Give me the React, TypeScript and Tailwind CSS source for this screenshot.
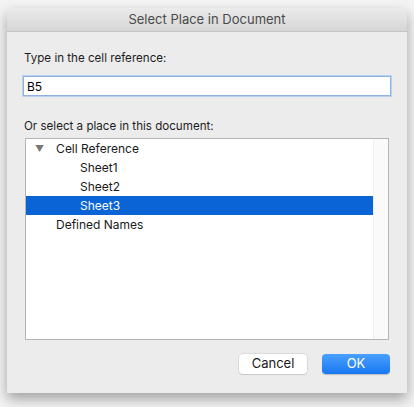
import React, { useState } from 'react'

const rows = [
  { label: 'Cell Reference', indent: false, toggle: true },
  { label: 'Sheet1', indent: true },
  { label: 'Sheet2', indent: true },
  { label: 'Sheet3', indent: true },
  { label: 'Defined Names', indent: false },
]

export default function App() {
  const [ref, setRef] = useState('B5')
  const [selected, setSelected] = useState('Sheet3')

  return (
    <div
      className="w-[414px] h-[407px] bg-[#f4f4f4] pt-[8px] px-[7px] overflow-hidden"
      style={{ fontFamily: 'Inter, "Liberation Sans", sans-serif' }}
    >
      <div className="w-[400px] h-[385px] bg-[#ececec] flex flex-col shadow-[0_6px_14px_rgba(0,0,0,0.35)] rounded-t-[4px]">
        <div className="h-[24px] flex items-center justify-center bg-gradient-to-b from-[#ebebeb] to-[#d6d6d6] border-b border-[#c4c4c4] rounded-t-[4px] text-[13px] text-[#4a4a4a]">
          Select Place in Document
        </div>

        <div className="flex flex-col px-[16px] pt-[18px]">
          <label className="text-[11.6px] text-[#1e1e1e] leading-[16px] pl-[1px]">Type in the cell reference:</label>
          <input
            value={ref}
            onChange={(e) => setRef(e.target.value)}
            className="mt-[10px] h-[20px] w-[368px] bg-white border border-[#8fb3e0] shadow-[0_0_0_1px_#b9d1ef] px-[3px] text-[12px] text-black outline-none"
          />
          <div className="mt-[22px] text-[11.6px] text-[#1e1e1e] leading-[16px] pl-[1px]">Or select a place in this document:</div>

          <div className="mt-[4px] ml-[2px] w-[364px] h-[202px] bg-white border border-[#b5b5b5] flex">
            <div className="flex-1 flex flex-col">
              {rows.map((r) => {
                const active = r.label === selected
                return (
                  <div
                    key={r.label}
                    onClick={() => setSelected(r.label)}
                    className={
                      'h-[19px] flex items-center text-[12px] ' +
                      (active ? 'bg-[#0a64d6] text-white' : 'text-[#1a1a1a]')
                    }
                  >
                    {r.toggle && <span className="ml-[9px] mr-[12px] text-[9px] text-[#777]">▼</span>}
                    <span className={r.indent ? 'pl-[54px]' : r.toggle ? '' : 'pl-[30px]'}>{r.label}</span>
                  </div>
                )
              })}
            </div>
            <div className="w-[15px] bg-[#fafafa] border-l border-[#eeeeee]" />
          </div>
        </div>

        <div className="flex justify-end gap-[15px] pr-[17px] mt-[14px]">
          <button className="w-[68px] h-[20px] bg-white rounded-[4px] shadow-[0_0_0_0.5px_#c8c8c8,0_1px_1px_rgba(0,0,0,0.15)] text-[13px] text-[#1a1a1a]">
            Cancel
          </button>
          <button className="w-[68px] h-[20px] rounded-[4px] bg-gradient-to-b from-[#4aa0ff] to-[#1577f0] text-[13px] text-white shadow-[0_1px_1px_rgba(0,0,0,0.2)]">
            OK
          </button>
        </div>
      </div>
    </div>
  )
}
